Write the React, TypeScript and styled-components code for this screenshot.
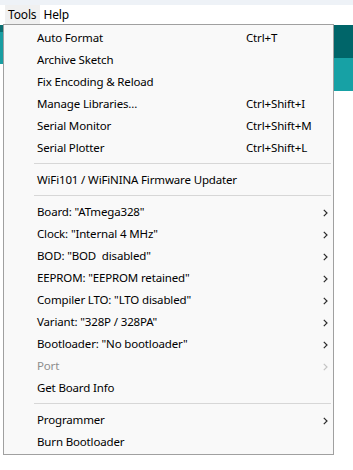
import React from "react";
import styled, { createGlobalStyle } from "styled-components";

const GlobalStyle = createGlobalStyle`
  html, body {
    margin: 0;
    padding: 0;
    background: #ffffff;
  }
  body {
    font-family: "Segoe UI", "Noto Sans", "Liberation Sans", sans-serif;
    font-size: 11.5px;
    letter-spacing: -0.15px;
    color: #000;
  }
`;

type Entry =
  | { kind: "item"; label: string; shortcut?: string; submenu?: boolean; disabled?: boolean }
  | { kind: "separator" };

const entries: Entry[] = [
  { kind: "item", label: "Auto Format", shortcut: "Ctrl+T" },
  { kind: "item", label: "Archive Sketch" },
  { kind: "item", label: "Fix Encoding & Reload" },
  { kind: "item", label: "Manage Libraries...", shortcut: "Ctrl+Shift+I" },
  { kind: "item", label: "Serial Monitor", shortcut: "Ctrl+Shift+M" },
  { kind: "item", label: "Serial Plotter", shortcut: "Ctrl+Shift+L" },
  { kind: "separator" },
  { kind: "item", label: "WiFi101 / WiFiNINA Firmware Updater" },
  { kind: "separator" },
  { kind: "item", label: 'Board: "ATmega328"', submenu: true },
  { kind: "item", label: 'Clock: "Internal 4 MHz"', submenu: true },
  { kind: "item", label: 'BOD: "BOD\u00a0 disabled"', submenu: true },
  { kind: "item", label: 'EEPROM: "EEPROM retained"', submenu: true },
  { kind: "item", label: 'Compiler LTO: "LTO disabled"', submenu: true },
  { kind: "item", label: 'Variant: "328P / 328PA"', submenu: true },
  { kind: "item", label: 'Bootloader: "No bootloader"', submenu: true },
  { kind: "item", label: "Port", submenu: true, disabled: true },
  { kind: "item", label: "Get Board Info" },
  { kind: "separator" },
  { kind: "item", label: "Programmer", submenu: true },
  { kind: "item", label: "Burn Bootloader" },
];

const Chevron: React.FC<{ disabled?: boolean }> = ({ disabled }) => (
  <svg width="5" height="8" viewBox="0 0 5 8" aria-hidden="true">
    <path
      d="M0.8 0.8 L4 4 L0.8 7.2"
      fill="none"
      stroke={disabled ? "#c4c4c4" : "#2b2b2b"}
      strokeWidth="1.2"
    />
  </svg>
);

const App: React.FC = () => (
  <>
    <GlobalStyle />
    <Screen>
      <TitleStrip />
      <MenuBar>
        <BarItem $open>Tools</BarItem>
        <BarItem>Help</BarItem>
      </MenuBar>
      <Body>
        <LeftGutter>
          <Stripe $color="#0b6f72" $height={7} />
          <Stripe $color="#1a9ea2" $height={32} />
        </LeftGutter>
        <Dropdown>
          {entries.map((e, i) =>
            e.kind === "separator" ? (
              <Separator key={i} />
            ) : (
              <Item key={i} $disabled={e.disabled}>
                <span>{e.label}</span>
                <span>{e.shortcut}</span>
                <Arrow>{e.submenu && <Chevron disabled={e.disabled} />}</Arrow>
              </Item>
            )
          )}
        </Dropdown>
        <RightGutter>
          <Stripe $color="#006569" $height={33} />
          <Stripe $color="#17a1a5" $height={33} />
        </RightGutter>
      </Body>
    </Screen>
  </>
);

const Screen = styled.div`
  width: 353px;
  height: 470px;
  overflow: hidden;
  display: flex;
  flex-direction: column;
`;

const TitleStrip = styled.div`
  height: 5px;
  background: #eef2f7;
`;

const MenuBar = styled.div`
  height: 19px;
  display: flex;
  align-items: stretch;
  padding-left: 5px;
  background: #ffffff;
  font-size: 12px;
`;

const BarItem = styled.div<{ $open?: boolean }>`
  display: flex;
  align-items: center;
  padding: 0 4px 1px 3px;
  background: ${(p) => (p.$open ? "#f0f0f0" : "transparent")};
`;

const Body = styled.div`
  display: flex;
  align-items: flex-start;
`;

const LeftGutter = styled.div`
  width: 3px;
  display: flex;
  flex-direction: column;
  padding-top: 1px;
`;

const RightGutter = styled.div`
  flex: 1;
  display: flex;
  flex-direction: column;
  padding-top: 1px;
`;

const Stripe = styled.div<{ $color: string; $height: number }>`
  height: ${(p) => p.$height}px;
  background: ${(p) => p.$color};
`;

const Dropdown = styled.div`
  width: 329px;
  border: 1px solid #a0a0a0;
  background: #f9f9f9;
  padding: 3px 0 0;
  display: flex;
  flex-direction: column;
`;

const Item = styled.div<{ $disabled?: boolean }>`
  box-sizing: border-box;
  height: 22px;
  display: grid;
  grid-template-columns: 1fr 77px 10px;
  align-items: center;
  padding: 0 0 2px 33px;
  line-height: 16px;
  color: ${(p) => (p.$disabled ? "#8d8d8d" : "#000")};
  white-space: nowrap;
`;

const Arrow = styled.span`
  display: flex;
  align-items: center;
  padding-top: 2px;
`;

const Separator = styled.div`
  height: 10px;
  margin: 0 2px 0 30px;
  &::before {
    content: "";
    display: block;
    margin-top: 3px;
    height: 1px;
    background: #d7d7d7;
  }
`;

export default App;
